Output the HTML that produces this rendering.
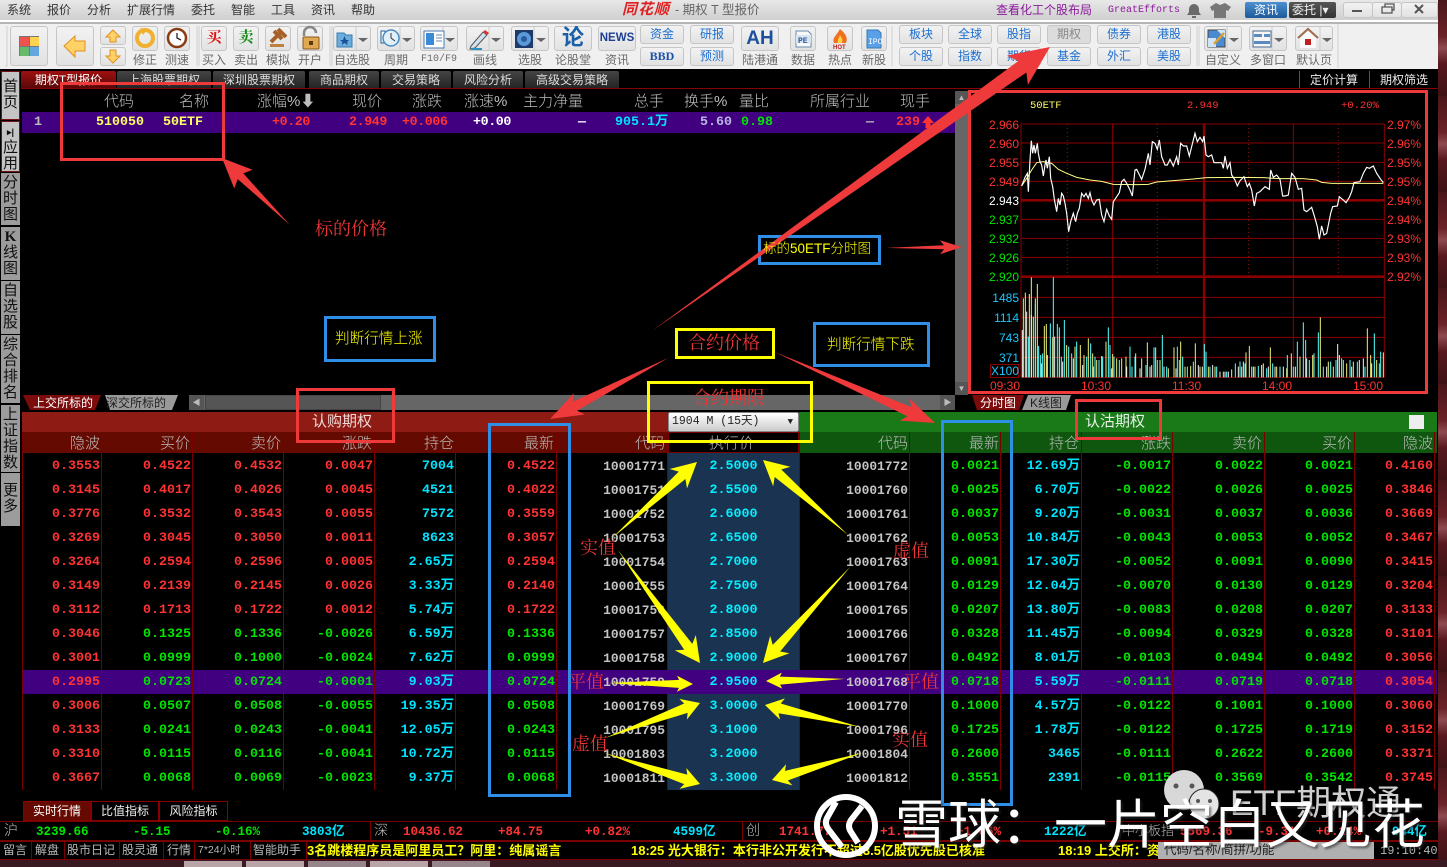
<!DOCTYPE html>
<html lang="zh"><head><meta charset="utf-8"><title>期权T型报价</title>
<style>
html,body{margin:0;padding:0;background:#000}
#p{position:relative;width:1447px;height:867px;overflow:hidden;background:#000;font-family:"Liberation Sans","Noto Sans CJK SC",sans-serif}
#p div,#p span{position:absolute;white-space:nowrap}
.m{top:3px;font-size:12px;line-height:15px;color:#333}
.b{background:linear-gradient(#f2f2f2,#e2e2e2);border:1px solid #c6c6c6;border-radius:3px;box-sizing:border-box}
.l{top:53px;font-size:12px;line-height:14px;color:#6a6a6a;text-align:center}
.bl{box-sizing:border-box;background:linear-gradient(#f2f2f2,#e2e2e2);border:1px solid #c6c6c6;border-radius:3px;text-align:center;font-size:12px;line-height:16px;color:#1c6fd0}
.tab{top:71px;height:17px;background:linear-gradient(#454545,#242424);color:#ddd;font-size:12px;line-height:18px;text-align:center;border-radius:2px 2px 0 0}
.s{left:1px;width:19px;background:#9c9c9c;color:#111;font-size:15px;line-height:16px;text-align:center;white-space:normal!important;box-sizing:border-box}
.h{font-size:15px;line-height:18px;color:#bdbdbd;font-weight:300}
.n{font-family:"Liberation Mono","Noto Sans CJK SC",monospace;font-weight:bold;font-size:13.33px;line-height:16px}
.row{left:0;width:1447px;height:24px}
.row i{position:absolute;top:6px;font-style:normal;font-family:"Liberation Mono","Noto Sans CJK SC",monospace;font-weight:bold;font-size:13.33px;line-height:16px;text-align:right;white-space:nowrap;left:0}
.row i:nth-child(1){width:100px}.row i:nth-child(2){width:191px}.row i:nth-child(3){width:282px}.row i:nth-child(4){width:373px}.row i:nth-child(5){width:454px}.row i:nth-child(6){width:555px}.row i:nth-child(7){width:665px;color:#c4c4c4;font-size:12.9px}
.row i:nth-child(8){left:668px;width:131px;text-align:center;color:#00f0ff}
.row i:nth-child(9){width:908px;color:#c4c4c4;font-size:12.9px}.row i:nth-child(10){width:999px}.row i:nth-child(11){width:1080px}.row i:nth-child(12){width:1171px}.row i:nth-child(13){width:1263px}.row i:nth-child(14){width:1353px}.row i:nth-child(15){width:1433px}
.r{color:#ff3333}.g{color:#00e600}.c{color:#00e4ff}
.cl{font-size:12px;line-height:14px;text-align:right;width:50px;left:969px}
.cr{font-size:12px;line-height:14px;color:#ff3333;left:1387px}
.ct{font-size:12px;line-height:14px;color:#ff3333;top:379px}
.st{top:824px;font-family:"Liberation Mono","Noto Sans CJK SC",monospace;font-size:12.5px;line-height:16px;font-weight:bold}
.bt{top:842px;font-size:12px;line-height:17px;color:#b8b8b8}
.yl{top:843px;font-size:13px;line-height:16px;color:#ffff00;font-weight:bold}
.an{color:#ee3535;font-size:18px;line-height:22px;font-family:"Liberation Serif","Noto Serif CJK SC",serif}
.ann{color:#ffff00;font-size:14.6px;line-height:18px;font-weight:300}
.box{box-sizing:border-box;border:3px solid #2f8fe6}
</style></head><body><div id="p">

<!-- title / menu -->
<div style="left:0;top:0;width:1438px;height:20px;background:linear-gradient(#e8e8e8,#cfcfcf)"></div>
<div style="left:0;top:20px;width:1438px;height:2px;background:#fff"></div>
<div style="left:0;top:22px;width:1438px;height:2px;background:#b4b4b4"></div>
<div style="left:0;top:24px;width:1438px;height:45px;background:#f0f0f0"></div>
<span class="m" style="left:7px">系统</span><span class="m" style="left:47px">报价</span><span class="m" style="left:87px">分析</span><span class="m" style="left:127px">扩展行情</span><span class="m" style="left:191px">委托</span><span class="m" style="left:231px">智能</span><span class="m" style="left:271px">工具</span><span class="m" style="left:311px">资讯</span><span class="m" style="left:351px">帮助</span>
<span style="left:622px;top:1px;font-size:15px;line-height:18px;font-weight:bold;font-style:italic;color:#e02020;letter-spacing:1px">同花顺</span>
<span style="left:675px;top:3px;font-size:12.5px;line-height:15px;color:#666">- 期权 T 型报价</span>
<span style="left:996px;top:3px;font-size:12px;line-height:15px;color:#8a1a9a">查看化工个股布局</span>
<span style="left:1108px;top:4px;font-family:'Liberation Mono',monospace;font-size:10px;line-height:14px;color:#8a1a9a">GreatEfforts</span>
<div style="left:1245px;top:2px;width:42px;height:16px;background:linear-gradient(#4c8fd0,#1c5a9a);color:#fff;font-size:12px;line-height:16px;text-align:center;border-radius:2px">资讯</div>
<div style="left:1289px;top:2px;width:47px;height:16px;background:linear-gradient(#555,#333);color:#eee;font-size:12px;line-height:16px;border-radius:2px;text-indent:3px">委托 |▾</div>
<div class="b" style="left:1343px;top:2px;width:30px;height:16px"></div><div class="b" style="left:1372px;top:2px;width:30px;height:16px"></div><div class="b" style="left:1401px;top:2px;width:37px;height:16px"></div>

<!-- toolbar plain buttons -->
<div class="b" style="left:10px;top:26px;width:38px;height:40px"></div>
<div class="b" style="left:56px;top:26px;width:38px;height:40px"></div>
<div class="b" style="left:100px;top:26px;width:26px;height:19px"></div>
<div class="b" style="left:100px;top:47px;width:26px;height:19px"></div>
<div class="b" style="left:132px;top:26px;width:26px;height:25px"></div>
<div class="b" style="left:164px;top:26px;width:26px;height:25px"></div>
<div class="b" style="left:201px;top:26px;width:26px;height:25px;color:#e01010;font:bold 15px/23px 'Liberation Serif','Noto Serif CJK SC',serif;text-align:center">买</div>
<div class="b" style="left:233px;top:26px;width:26px;height:25px;color:#108a10;font:bold 15px/23px 'Liberation Serif','Noto Serif CJK SC',serif;text-align:center">卖</div>
<div class="b" style="left:265px;top:26px;width:26px;height:25px"></div>
<div class="b" style="left:297px;top:26px;width:26px;height:25px"></div>
<div class="b" style="left:333px;top:26px;width:38px;height:25px"></div>
<div class="b" style="left:377px;top:26px;width:38px;height:25px"></div>
<div class="b" style="left:420px;top:26px;width:38px;height:25px"></div>
<div class="b" style="left:466px;top:26px;width:38px;height:25px"></div>
<div class="b" style="left:511px;top:26px;width:38px;height:25px"></div>
<div class="b" style="left:554px;top:26px;width:38px;height:25px;color:#1a5fa8;font-size:22px;line-height:22px;font-weight:bold;text-align:center">论</div>
<div class="b" style="left:598px;top:26px;width:38px;height:25px;color:#1d3f94;font:bold 11.5px/23px 'Liberation Sans',sans-serif;text-align:center">NEWS</div>
<div class="bl" style="left:640px;top:25px;width:44px;height:19px">资金</div>
<div class="bl" style="left:640px;top:47px;width:44px;height:19px;font:bold 12px/16px 'Liberation Serif',serif;color:#1a50a8">BBD</div>
<div class="bl" style="left:690px;top:25px;width:44px;height:19px">研报</div>
<div class="bl" style="left:690px;top:47px;width:44px;height:19px">预测</div>
<div class="b" style="left:741px;top:26px;width:38px;height:25px;color:#1d4f9c;font:bold 19px/23px 'Liberation Sans',sans-serif;text-align:center">AH</div>
<div class="b" style="left:790px;top:26px;width:26px;height:25px"></div>
<div class="b" style="left:827px;top:26px;width:26px;height:25px"></div>
<div class="b" style="left:861px;top:26px;width:26px;height:25px"></div>
<div class="bl" style="left:899px;top:25px;width:44px;height:19px">板块</div><div class="bl" style="left:899px;top:47px;width:44px;height:19px">个股</div>
<div class="bl" style="left:948px;top:25px;width:44px;height:19px">全球</div><div class="bl" style="left:948px;top:47px;width:44px;height:19px">指数</div>
<div class="bl" style="left:997px;top:25px;width:44px;height:19px">股指</div><div class="bl" style="left:997px;top:47px;width:44px;height:19px">期货</div>
<div class="bl" style="left:1047px;top:25px;width:44px;height:19px;color:#888;background:#dcdcdc">期权</div><div class="bl" style="left:1047px;top:47px;width:44px;height:19px">基金</div>
<div class="bl" style="left:1097px;top:25px;width:44px;height:19px">债券</div><div class="bl" style="left:1097px;top:47px;width:44px;height:19px">外汇</div>
<div class="bl" style="left:1147px;top:25px;width:44px;height:19px">港股</div><div class="bl" style="left:1147px;top:47px;width:44px;height:19px">美股</div>
<div class="b" style="left:1204px;top:26px;width:38px;height:25px"></div>
<div class="b" style="left:1249px;top:26px;width:38px;height:25px"></div>
<div class="b" style="left:1295px;top:26px;width:38px;height:25px"></div>
<!-- toolbar labels -->
<span class="l" style="left:132px;width:26px">修正</span><span class="l" style="left:164px;width:26px">测速</span>
<span class="l" style="left:201px;width:26px">买入</span><span class="l" style="left:233px;width:26px">卖出</span><span class="l" style="left:265px;width:26px">模拟</span><span class="l" style="left:297px;width:26px">开户</span>
<span class="l" style="left:333px;width:38px">自选股</span><span class="l" style="left:377px;width:38px">周期</span><span class="l" style="left:420px;width:38px;font-family:'Liberation Mono',monospace;font-size:10px">F10/F9</span>
<span class="l" style="left:466px;width:38px">画线</span><span class="l" style="left:511px;width:38px">选股</span><span class="l" style="left:554px;width:38px">论股堂</span><span class="l" style="left:598px;width:38px">资讯</span>
<span class="l" style="left:741px;width:38px">陆港通</span><span class="l" style="left:790px;width:26px">数据</span><span class="l" style="left:827px;width:26px">热点</span><span class="l" style="left:861px;width:26px">新股</span>
<span class="l" style="left:1204px;width:38px">自定义</span><span class="l" style="left:1249px;width:38px">多窗口</span><span class="l" style="left:1295px;width:38px">默认页</span>

<!-- toolbar icons -->
<svg style="position:absolute;left:0;top:0" width="1447" height="70">
<g stroke="#d0d0d0" fill="none"><path d="M7 26V66M5 66H7M197 26V66M199 26V66M330 26V66M332 26V66M892 26V66M1197 26V66M1199 26V66M1338 24V68"/></g>
<rect x="19" y="36" width="20" height="20" fill="#777"/><rect x="20" y="37" width="9" height="9" fill="#ef5350"/><rect x="30" y="37" width="9" height="9" fill="#ffd54f"/><rect x="20" y="47" width="9" height="9" fill="#66bb6a"/><rect x="30" y="47" width="9" height="9" fill="#64a6e0"/>
<path d="M64 46 75 36V41H85V51H75V57Z" fill="#ffd268" stroke="#e09020"/>
<path d="M113 30 120 37H116V42H110V37H106Z" fill="#ffd268" stroke="#e09020"/>
<path d="M113 63 120 56H116V50H110V56H106Z" fill="#ffd268" stroke="#e09020"/>
<circle cx="145" cy="38" r="8" fill="none" stroke="#f0b030" stroke-width="4"/><path d="M140 28 147 30 143 35Z" fill="#f0b030"/>
<circle cx="177" cy="38" r="9" fill="#fff" stroke="#8a3a10" stroke-width="2.5"/><path d="M177 33V38L181 40" fill="none" stroke="#222" stroke-width="1.3"/>
<path d="M271 42 282 31M278 29 286 37M282 39 274 31" stroke="#a8602a" stroke-width="4" fill="none"/><rect x="270" y="44" width="14" height="3" fill="#c08040"/>
<path d="M304 36V33a6 6 0 0 1 12 0" fill="none" stroke="#888" stroke-width="2.5"/><rect x="303" y="37" width="16" height="12" rx="1" fill="#e0a850" stroke="#8a5a20"/><rect x="309" y="41" width="4" height="4" fill="#5a3a10"/>
<path d="M337 33H344L346 35H352V47H337Z" fill="#6aaede" stroke="#3a7ab0"/><path d="M344.500 36 346 40H349L347 42 348 45 344.500 43 341.500 45 342.500 42 340 40H343Z" fill="#1a4f9a"/>
<path d="M358 38H368L363 42Z M402 38H412L407 42Z M445 38H455L450 42Z M491 38H501L496 42Z M536 38H546L541 42Z M1229 38H1239L1234 42Z M1274 38H1284L1279 42Z M1322 38H1332L1327 42Z" fill="#666"/>
<path d="M356 27V50M400 27V50M443 27V50M489 27V50M534 27V50M1227 27V50M1272 27V50M1320 27V50" stroke="#ccc"/>
<rect x="381" y="31" width="4" height="12" fill="#fff" stroke="#2060a0"/><circle cx="391" cy="38" r="8" fill="#e0f0fa" stroke="#4a8ac0" stroke-width="1.500"/><path d="M391 33V38L395 41" stroke="#333" fill="none"/>
<rect x="424" y="31" width="20" height="17" fill="#fff" stroke="#4a7ab0"/><rect x="426" y="33" width="8" height="12" fill="#3a8ad8"/><path d="M436 35H442M436 38H442M436 41H442" stroke="#6a8ab0"/>
<path d="M471 46 483 32 487 35 475 48 470 49Z" fill="#cfe0f0" stroke="#555"/><path d="M483 32 485 30 489 33 487 35Z" fill="#e03030"/><path d="M471 49H482" stroke="#2a90c0" stroke-width="2"/>
<rect x="515" y="30" width="18" height="18" fill="#1d3a6a"/><circle cx="524" cy="39" r="7" fill="#5a9ad8"/><circle cx="524" cy="39" r="3" fill="#2a5a98"/>
<path d="M796 31H808L811 34V47H796Z" fill="#f8f8f8" stroke="#6a8ab0"/><rect x="796" y="35" width="15" height="8" fill="#d8e4f0"/>
<text x="798" y="43" font-family="Liberation Mono,monospace" font-size="8" font-weight="bold" fill="#2a5a98">PE</text>
<path d="M840 29C846 34 848 38 846 43H834C832 38 836 36 840 29Z" fill="#f07020"/><path d="M840 35C842 38 843 40 842 43H838C837 40 839 38 840 35Z" fill="#ffd040"/>
<text x="833" y="49" font-family="Liberation Sans,sans-serif" font-size="6" font-weight="bold" fill="#c02020">HOT</text>
<path d="M867 30H878L881 33V48H867Z" fill="#5aa0e8" stroke="#3a7ab0"/><text x="868" y="44" font-family="Liberation Mono,monospace" font-size="8" fill="#fff">IPO</text>
<rect x="1208" y="30" width="17" height="17" fill="#4a8ad0" stroke="#444"/><path d="M1217 30H1225V38ZM1208 38H1216V47H1208Z" fill="#cfe4f6"/><path d="M1214 44 1224 33" stroke="#e0a030" stroke-width="2.500"/>
<rect x="1253" y="31" width="18" height="16" fill="#f6f6f6" stroke="#4a6a90"/><path d="M1254 34H1262V37H1254ZM1264 34H1270V37H1264ZM1254 41H1270V44H1254Z" fill="#5a8ac0"/>
<path d="M1298 38 1308 29 1318 38" fill="none" stroke="#a06a4a" stroke-width="2"/><path d="M1300 38 1308 31 1316 38V48H1300Z" fill="#fafafa"/><rect x="1305" y="39" width="6" height="6" fill="#c02020"/>
<path d="M1191 5a5 5 0 0 1 5 5v3l2 3h-14l2-3v-3a5 5 0 0 1 5-5ZM1189 17h4v2h-4Z" transform="translate(3 -1)" fill="#6a6a6a"/>
<path d="M1216 3 1220 5 1225 3 1231 7 1228 11 1226 10V18H1214V10L1212 11 1210 7Z" fill="#777"/>
<path d="M1352 11H1362" stroke="#555" stroke-width="2"/><path d="M1382 7H1392V13H1382ZM1385 7V4H1394V10H1392" fill="none" stroke="#555" stroke-width="1.300"/><path d="M1415 5 1423 13M1423 5 1415 13" stroke="#555" stroke-width="2"/>
</svg>

<!-- left sidebar -->
<div class="s" style="top:71px;height:49px;background:#c4c4c4;border:1px solid #7a1010;padding-top:7px">首<br>页</div>
<div class="s" style="top:121px;height:51px;background:#c4c4c4;border:1px solid #7a1010;padding-top:1px"><b style="font-size:9px;line-height:15px">▸|</b><br>应<br>用</div>
<div class="s" style="top:173px;height:52px;padding-top:2px">分<br>时<br>图</div>
<div class="s" style="top:227px;height:53px;padding-top:2px"><b style="font-family:'Liberation Serif',serif">K</b><br>线<br>图</div>
<div class="s" style="top:281px;height:53px;padding-top:2px">自<br>选<br>股</div>
<div class="s" style="top:335px;height:68px;padding-top:2px">综<br>合<br>排<br>名</div>
<div class="s" style="top:405px;height:67px;padding-top:2px">上<br>证<br>指<br>数</div>
<div class="s" style="top:473px;height:53px;padding-top:10px">更<br>多</div>

<!-- top tabs -->
<div class="tab" style="left:21px;width:95px;background:linear-gradient(#a01010,#5a0808);color:#fff">期权T型报价</div>
<div class="tab" style="left:117px;width:94px">上海股票期权</div>
<div class="tab" style="left:213px;width:92px">深圳股票期权</div>
<div class="tab" style="left:309px;width:70px">商品期权</div>
<div class="tab" style="left:381px;width:70px">交易策略</div>
<div class="tab" style="left:453px;width:70px">风险分析</div>
<div class="tab" style="left:525px;width:94px">高级交易策略</div>
<div style="left:1299px;top:71px;width:1px;height:17px;background:#555"></div><div style="left:1369px;top:71px;width:1px;height:17px;background:#555"></div>
<span style="left:1310px;top:72px;font-size:12px;line-height:16px;color:#eee">定价计算</span><span style="left:1380px;top:72px;font-size:12px;line-height:16px;color:#eee">期权筛选</span>
<div style="left:21px;top:88px;width:1417px;height:1px;background:#800"></div>

<!-- top table -->
<span class="h" style="left:104px;top:93px">代码</span><span class="h" style="left:179px;top:93px">名称</span><span class="h" style="left:257px;top:93px">涨幅<b>%⬇</b></span><span class="h" style="left:352px;top:93px">现价</span><span class="h" style="left:412px;top:93px">涨跌</span><span class="h" style="left:464px;top:93px">涨速<b>%</b></span><span class="h" style="left:523px;top:93px">主力净量</span><span class="h" style="left:634px;top:93px">总手</span><span class="h" style="left:684px;top:93px">换手<b>%</b></span><span class="h" style="left:739px;top:93px">量比</span><span class="h" style="left:810px;top:93px">所属行业</span><span class="h" style="left:900px;top:93px">现手</span>
<div style="left:22px;top:112px;width:933px;height:21px;background:#400080"></div>
<span class="n" style="left:34px;top:115px;color:#bbb">1</span>
<span class="n" style="left:96px;top:115px;color:#ffff66">510050</span><span class="n" style="left:163px;top:115px;color:#ffff66">50ETF</span>
<span class="n r" style="left:272px;top:115px;letter-spacing:-.4px">+0.20</span><span class="n r" style="left:349px;top:115px;letter-spacing:-.4px">2.949</span><span class="n r" style="left:402px;top:115px;letter-spacing:-.4px">+0.006</span><span class="n" style="left:473px;top:115px;color:#fff;letter-spacing:-.4px">+0.00</span>
<span class="n" style="left:578px;top:115px;color:#fff">—</span><span class="n c" style="left:615px;top:115px">905.1万</span><span class="n" style="left:700px;top:115px;color:#b8b8e0">5.60</span><span class="n g" style="left:741px;top:115px">0.98</span><span class="n" style="left:866px;top:115px;color:#bbb">—</span><span class="n r" style="left:896px;top:115px">239</span>
<svg style="position:absolute;left:922px;top:116px" width="13" height="13"><path d="M6 0 12 7H8.500V12H3.500V7H0Z" fill="#ff3333"/></svg>

<!-- vertical scrollbar / bottom tab strip -->
<div style="left:955px;top:91px;width:13px;height:304px;background:#666"></div>
<div style="left:955px;top:91px;width:13px;height:13px;background:#555;color:#bbb;font-size:8px;line-height:13px;text-align:center">▲</div>
<div style="left:955px;top:382px;width:13px;height:13px;background:#555;color:#bbb;font-size:8px;line-height:13px;text-align:center">▼</div>
<svg style="position:absolute;left:20px;top:394px" width="170" height="17"><path d="M3 1H81L75 16H10Z" fill="#7c0c0c"/><path d="M85 1H158L152 16H90Z" fill="#999"/></svg>
<span style="left:33px;top:396px;font-size:12px;line-height:14px;color:#fff">上交所标的</span>
<span style="left:106px;top:396px;font-size:12px;line-height:14px;color:#222">深交所标的</span>
<div style="left:189px;top:395px;width:766px;height:15px;background:#666"></div>
<div style="left:189px;top:395px;width:15px;height:15px;background:#555;color:#bbb;font-size:8px;line-height:15px;text-align:center">◀</div>
<div style="left:205px;top:395px;width:176px;height:15px;background:#555;border:1px solid #444;box-sizing:border-box"></div>
<div style="left:940px;top:395px;width:15px;height:15px;background:#555;color:#bbb;font-size:8px;line-height:15px;text-align:center">▶</div>
<svg style="position:absolute;left:968px;top:394px" width="110" height="17"><path d="M4 1H56L51 16H9Z" fill="#7c0c0c"/><path d="M60 1H103L98 16H54Z" fill="#999"/></svg>
<span style="left:980px;top:396px;font-size:12px;line-height:14px;color:#fff">分时图</span><span style="left:1030px;top:396px;font-size:12px;line-height:14px;color:#222">K线图</span>

<!-- chart -->
<svg style="position:absolute;left:0;top:0" width="1447" height="410">
<g transform="translate(960 90) scale(.33333)" fill="none">
<path d="M183 102H1273M183 159H1273M183 217H1273M183 274H1273M183 388H1273M183 445H1273M183 502H1273M183 622H1273M183 682H1273M183 742H1273M183 802H1273M183 862H1273" stroke="#8a0000" stroke-width="3"/>
<path d="M183 331H1273M183 560H1273" stroke="#8a0000" stroke-width="8"/>
<path d="M183 560H1273" stroke="#8a0000" stroke-width="4"/>
<path d="M183 102V862M458 102V862M1000 102V862M1273 102V862" stroke="#8a0000" stroke-width="3"/>
<path d="M732 102V862" stroke="#8a0000" stroke-width="7"/>
<path d="M322 102V560M592 102V560M866 102V560M1135 102V560" stroke="#a01010" stroke-width="3" stroke-dasharray="3 9"/>
<path stroke="#eeee77" stroke-width="3" d="M190 862V625M196 862V608M208 862V612M214 862V562M220 862V680M226 862V625M232 862V582M253 862V708M259 862V702M278 862V742M298 862V740M320 862V765M345 862V770M361 862V765M372 862V795M385 862V745M398 862V790M410 862V810M425 862V798M438 862V755M458 862V792M470 862V805M485 862V805M498 862V800M527 862V790M545 862V805M562 862V757M575 862V825M587 862V772M600 862V810M625 862V835M642 862V772M662 862V755M675 862V830M692 862V828M706 862V760M720 862V830M745 862V830M765 862V830M790 862V845M815 862V838M845 862V830M858 862V787M868 862V768M885 862V830M910 862V820M931 862V772M950 862V830M980 862V835M994 862V790M1020 862V800M1058 862V795M1081 862V682M1105 862V815M1120 862V830M1145 862V805M1160 862V820M1180 862V815M1222 862V715M1232 862V795M1250 862V810M1270 862V787"/>
<path stroke="#55ffff" stroke-width="3" d="M205 862V740M226 862V640M236 862V768M242 862V795M248 862V790M271 862V700M280 862V562M292 862V702M298 862V712M304 862V800M313 862V690M326 862V770M335 862V790M350 862V755M380 862V800M392 862V760M405 862V800M417 862V810M428 862V800M445 862V712M450 862V765M462 862V800M478 862V810M510 862V770M516 862V830M525 862V800M558 862V825M582 862V772M592 862V810M607 862V735M620 862V830M652 862V770M658 862V810M668 862V800M682 862V830M700 862V815M733 862V762M738 862V785M750 862V830M770 862V830M800 862V845M826 862V820M840 862V815M855 862V820M875 862V830M895 862V828M920 862V835M938 862V820M960 862V830M982 862V795M1000 862V830M1012 862V755M1030 862V697M1037 862V750M1048 862V810M1062 862V790M1075 862V727M1090 862V830M1112 862V815M1128 862V810M1150 862V810M1170 862V810M1192 862V815M1215 862V830M1243 862V730M1258 862V820M1262 862V785"/>
<path stroke="#f4f4f4" stroke-width="3" d="M187 862V720M200 862V665M214 862V675M244 862V820M262 862V795M284 862V740M308 862V815M340 862V805M368 862V825M400 862V830M455 862V835M500 862V830M540 862V835M570 862V830M612 862V830M648 862V835M715 862V825M727 862V830M758 862V825M780 862V845M795 862V845M805 862V845M835 862V830M850 862V815M880 862V830M905 862V825M925 862V830M945 862V830M970 862V830M1006 862V830M1040 862V805M1100 862V830M1133 862V762M1138 862V795M1175 862V830M1198 862V810M1210 862V805M1235 862V820"/>
<polyline stroke="#ffff88" stroke-width="3" points="185,288 200,265 215,240 230,218 250,215 275,220 295,238 320,250 350,262 390,270 425,274 460,283 530,284 565,283 590,276 640,272 700,267 740,263 830,262 910,263 960,266 1030,266 1070,270 1085,277 1115,280 1270,280"/>
<polyline stroke="#ffffff" stroke-width="3.500" points="185,288 195,262 202,250 205,305 210,210 214,152 218,190 222,165 226,190 232,160 235,190 240,215 245,225 250,258 255,225 258,210 262,235 268,200 272,265 278,290 283,328 290,365 295,325 300,345 305,310 310,318 315,340 320,370 326,425 332,395 340,370 347,395 352,370 358,355 365,310 372,320 378,310 385,325 390,308 395,330 402,345 410,330 418,328 425,375 432,395 440,358 448,378 455,388 460,335 470,320 478,308 485,275 492,268 500,280 510,300 517,318 525,240 530,238 545,268 555,238 565,190 570,225 577,155 585,160 592,178 598,150 605,200 615,225 622,225 630,208 640,228 650,200 655,225 662,160 670,168 680,168 688,198 695,170 705,130 712,155 720,142 728,155 732,138 738,195 745,200 755,195 762,218 785,218 790,235 795,198 802,235 810,218 815,255 825,270 832,288 840,272 852,260 862,290 868,280 875,300 883,348 890,310 900,305 915,290 928,298 932,240 940,262 950,255 960,268 968,318 975,318 985,315 995,250 1005,262 1015,298 1025,295 1032,360 1040,365 1055,352 1065,385 1072,410 1078,448 1085,408 1092,435 1100,430 1112,370 1118,350 1132,348 1138,320 1150,330 1158,338 1168,322 1175,305 1182,278 1200,275 1210,250 1220,232 1228,235 1240,228 1250,250 1262,268 1270,278"/>
</g></svg>
<span style="left:1030px;top:99px;font-family:'Liberation Mono',monospace;font-size:10.500px;line-height:14px;color:#ffff66">50ETF</span>
<span style="left:1187px;top:99px;font-family:'Liberation Mono',monospace;font-size:10.500px;line-height:14px;color:#ff3333">2.949</span>
<span style="left:1341px;top:99px;font-family:'Liberation Mono',monospace;font-size:10.500px;line-height:14px;color:#ff3333">+0.20%</span>
<span class="cl r" style="top:118px">2.966</span><span class="cl r" style="top:137px">2.960</span><span class="cl r" style="top:156px">2.955</span><span class="cl r" style="top:175px">2.949</span><span class="cl" style="top:194px;color:#fff">2.943</span><span class="cl g" style="top:213px">2.937</span><span class="cl g" style="top:232px">2.932</span><span class="cl g" style="top:251px">2.926</span><span class="cl g" style="top:270px">2.920</span>
<span class="cl" style="top:291px;color:#1cc8ff">1485</span><span class="cl" style="top:311px;color:#1cc8ff">1114</span><span class="cl" style="top:331px;color:#1cc8ff">743</span><span class="cl" style="top:351px;color:#1cc8ff">371</span>
<div style="left:990px;top:364px;width:29px;height:14px;box-sizing:border-box;border:1px solid #8a0000;color:#1cc8ff;font-size:12px;line-height:13px;text-align:center">X100</div>
<span class="cr" style="top:118px">2.97%</span><span class="cr" style="top:137px">2.96%</span><span class="cr" style="top:156px">2.95%</span><span class="cr" style="top:175px">2.95%</span><span class="cr" style="top:194px">2.94%</span><span class="cr" style="top:213px">2.94%</span><span class="cr" style="top:232px">2.93%</span><span class="cr" style="top:251px">2.93%</span><span class="cr" style="top:270px">2.92%</span>
<span class="ct" style="left:990px">09:30</span><span class="ct" style="left:1081px">10:30</span><span class="ct" style="left:1172px">11:30</span><span class="ct" style="left:1262px">14:00</span><span class="ct" style="left:1353px">15:00</span>

<!-- lower table headers -->
<div style="left:22px;top:412px;width:646px;height:20px;background:#8f1c14"></div>
<div style="left:799px;top:412px;width:638px;height:20px;background:#1a7a18"></div>
<div style="left:668px;top:412px;width:131px;height:20px;background:#000"></div>
<div style="left:22px;top:432px;width:646px;height:21px;background:#650a00"></div>
<div style="left:799px;top:432px;width:638px;height:21px;background:#0f560f"></div>
<div style="left:668px;top:432px;width:131px;height:21px;box-sizing:border-box;border:1px solid #7a0000;background:#000"></div>
<div style="left:668px;top:412px;width:131px;height:20px;box-sizing:border-box;background:linear-gradient(#fff,#ccc);border:1px solid #888;border-radius:2px;color:#222;font:11.500px/18px 'Liberation Mono','Noto Sans CJK SC',monospace;text-indent:3px">1904 M (15天)<span style="right:5px;top:0;font-size:9px">▼</span></div>
<div style="left:1409px;top:415px;width:15px;height:14px;background:#eee"></div>
<span style="left:312px;top:413px;font-size:15px;line-height:18px;color:#f0d8d8">认购期权</span>
<span style="left:1085px;top:413px;font-size:15px;line-height:18px;color:#e8f0e8">认沽期权</span>
<span class="h" style="left:70px;top:435px">隐波</span><span class="h" style="left:160px;top:435px">买价</span><span class="h" style="left:251px;top:435px">卖价</span><span class="h" style="left:342px;top:435px">涨跌</span><span class="h" style="left:424px;top:435px">持仓</span><span class="h" style="left:524px;top:435px">最新</span><span class="h" style="left:635px;top:435px">代码</span><span class="h" style="left:709px;top:435px">执行价</span>
<span class="h" style="left:878px;top:435px">代码</span><span class="h" style="left:969px;top:435px">最新</span><span class="h" style="left:1049px;top:435px">持仓</span><span class="h" style="left:1141px;top:435px">涨跌</span><span class="h" style="left:1232px;top:435px">卖价</span><span class="h" style="left:1322px;top:435px">买价</span><span class="h" style="left:1403px;top:435px">隐波</span>

<!-- lower table body -->
<div style="left:668px;top:453px;width:131px;height:337px;background:#1a3350"></div>
<div style="left:22px;top:670px;width:1415px;height:24px;background:#400080"></div>
<svg style="position:absolute;left:0;top:432px" width="1447" height="360"><path d="M22.500 0V358M101.500 0V358M192.500 0V358M283.500 0V358M374.500 0V358M455.500 0V358M556.500 0V358M667.500 0V358M799.500 0V358M909.500 0V358M1000.500 0V358M1081.500 0V358M1172.500 0V358M1264.500 0V358M1354.500 0V358M1434.500 0V358" stroke="#7a0000" fill="none"/></svg>

<div class="row" style="top:453px"><i class=r>0.3553</i><i class=r>0.4522</i><i class=r>0.4532</i><i class=r>0.0047</i><i class=c>7004</i><i class=r>0.4522</i><i>10001771</i><i>2.5000</i><i>10001772</i><i class=g>0.0021</i><i class=c>12.69万</i><i class=g>-0.0017</i><i class=g>0.0022</i><i class=g>0.0021</i><i class=r>0.4160</i></div>
<div class="row" style="top:477px"><i class=r>0.3145</i><i class=r>0.4017</i><i class=r>0.4026</i><i class=r>0.0045</i><i class=c>4521</i><i class=r>0.4022</i><i>10001751</i><i>2.5500</i><i>10001760</i><i class=g>0.0025</i><i class=c>6.70万</i><i class=g>-0.0022</i><i class=g>0.0026</i><i class=g>0.0025</i><i class=r>0.3846</i></div>
<div class="row" style="top:501px"><i class=r>0.3776</i><i class=r>0.3532</i><i class=r>0.3543</i><i class=r>0.0055</i><i class=c>7572</i><i class=r>0.3559</i><i>10001752</i><i>2.6000</i><i>10001761</i><i class=g>0.0037</i><i class=c>9.20万</i><i class=g>-0.0031</i><i class=g>0.0037</i><i class=g>0.0036</i><i class=r>0.3669</i></div>
<div class="row" style="top:525px"><i class=r>0.3269</i><i class=r>0.3045</i><i class=r>0.3050</i><i class=r>0.0011</i><i class=c>8623</i><i class=r>0.3057</i><i>10001753</i><i>2.6500</i><i>10001762</i><i class=g>0.0053</i><i class=c>10.84万</i><i class=g>-0.0043</i><i class=g>0.0053</i><i class=g>0.0052</i><i class=r>0.3467</i></div>
<div class="row" style="top:549px"><i class=r>0.3264</i><i class=r>0.2594</i><i class=r>0.2596</i><i class=r>0.0005</i><i class=c>2.65万</i><i class=r>0.2594</i><i>10001754</i><i>2.7000</i><i>10001763</i><i class=g>0.0091</i><i class=c>17.30万</i><i class=g>-0.0052</i><i class=g>0.0091</i><i class=g>0.0090</i><i class=r>0.3415</i></div>
<div class="row" style="top:573px"><i class=r>0.3149</i><i class=r>0.2139</i><i class=r>0.2145</i><i class=r>0.0026</i><i class=c>3.33万</i><i class=r>0.2140</i><i>10001755</i><i>2.7500</i><i>10001764</i><i class=g>0.0129</i><i class=c>12.04万</i><i class=g>-0.0070</i><i class=g>0.0130</i><i class=g>0.0129</i><i class=r>0.3204</i></div>
<div class="row" style="top:597px"><i class=r>0.3112</i><i class=r>0.1713</i><i class=r>0.1722</i><i class=r>0.0012</i><i class=c>5.74万</i><i class=r>0.1722</i><i>10001756</i><i>2.8000</i><i>10001765</i><i class=g>0.0207</i><i class=c>13.80万</i><i class=g>-0.0083</i><i class=g>0.0208</i><i class=g>0.0207</i><i class=r>0.3133</i></div>
<div class="row" style="top:621px"><i class=r>0.3046</i><i class=g>0.1325</i><i class=g>0.1336</i><i class=g>-0.0026</i><i class=c>6.59万</i><i class=g>0.1336</i><i>10001757</i><i>2.8500</i><i>10001766</i><i class=g>0.0328</i><i class=c>11.45万</i><i class=g>-0.0094</i><i class=g>0.0329</i><i class=g>0.0328</i><i class=r>0.3101</i></div>
<div class="row" style="top:645px"><i class=r>0.3001</i><i class=g>0.0999</i><i class=g>0.1000</i><i class=g>-0.0024</i><i class=c>7.62万</i><i class=g>0.0999</i><i>10001758</i><i>2.9000</i><i>10001767</i><i class=g>0.0492</i><i class=c>8.01万</i><i class=g>-0.0103</i><i class=g>0.0494</i><i class=g>0.0492</i><i class=r>0.3056</i></div>
<div class="row" style="top:669px"><i class=r>0.2995</i><i class=g>0.0723</i><i class=g>0.0724</i><i class=g>-0.0001</i><i class=c>9.03万</i><i class=g>0.0724</i><i>10001759</i><i>2.9500</i><i>10001768</i><i class=g>0.0718</i><i class=c>5.59万</i><i class=g>-0.0111</i><i class=g>0.0719</i><i class=g>0.0718</i><i class=r>0.3054</i></div>
<div class="row" style="top:693px"><i class=r>0.3006</i><i class=g>0.0507</i><i class=g>0.0508</i><i class=g>-0.0055</i><i class=c>19.35万</i><i class=g>0.0508</i><i>10001769</i><i>3.0000</i><i>10001770</i><i class=g>0.1000</i><i class=c>4.57万</i><i class=g>-0.0122</i><i class=g>0.1001</i><i class=g>0.1000</i><i class=r>0.3060</i></div>
<div class="row" style="top:717px"><i class=r>0.3133</i><i class=g>0.0241</i><i class=g>0.0243</i><i class=g>-0.0041</i><i class=c>12.05万</i><i class=g>0.0243</i><i>10001795</i><i>3.1000</i><i>10001796</i><i class=g>0.1725</i><i class=c>1.78万</i><i class=g>-0.0122</i><i class=g>0.1725</i><i class=g>0.1719</i><i class=r>0.3152</i></div>
<div class="row" style="top:741px"><i class=r>0.3310</i><i class=g>0.0115</i><i class=g>0.0116</i><i class=g>-0.0041</i><i class=c>10.72万</i><i class=g>0.0115</i><i>10001803</i><i>3.2000</i><i>10001804</i><i class=g>0.2600</i><i class=c>3465</i><i class=g>-0.0111</i><i class=g>0.2622</i><i class=g>0.2600</i><i class=r>0.3371</i></div>
<div class="row" style="top:765px"><i class=r>0.3667</i><i class=g>0.0068</i><i class=g>0.0069</i><i class=g>-0.0023</i><i class=c>9.37万</i><i class=g>0.0068</i><i>10001811</i><i>3.3000</i><i>10001812</i><i class=g>0.3551</i><i class=c>2391</i><i class=g>-0.0115</i><i class=g>0.3569</i><i class=g>0.3542</i><i class=r>0.3745</i></div>

<!-- lower tabs -->
<div style="left:23px;top:801px;width:68px;height:20px;box-sizing:border-box;border:1px solid #8a0000;background:#650a00;color:#fff;font-size:12px;line-height:18px;text-align:center">实时行情</div>
<div style="left:91px;top:801px;width:68px;height:20px;box-sizing:border-box;border:1px solid #8a0000;color:#eee;font-size:12px;line-height:18px;text-align:center">比值指标</div>
<div style="left:159px;top:801px;width:69px;height:20px;box-sizing:border-box;border:1px solid #8a0000;color:#eee;font-size:12px;line-height:18px;text-align:center">风险指标</div>

<!-- status bars -->
<div style="left:0;top:821px;width:1438px;height:1px;background:#7a0000"></div>
<div style="left:0;top:840px;width:1438px;height:2px;background:#7a0000"></div>
<div style="left:0;top:859px;width:1438px;height:1px;background:#7a0000"></div>
<div style="left:370px;top:822px;width:1px;height:18px;background:#7a0000"></div>
<div style="left:742px;top:822px;width:1px;height:18px;background:#7a0000"></div>
<span class="st" style="left:4px;color:#bbb;font-weight:300;font-size:14px">沪</span><span class="st g" style="left:36px">3239.66</span><span class="st g" style="left:133px">-5.15</span><span class="st g" style="left:215px">-0.16%</span><span class="st c" style="left:302px">3803亿</span>
<span class="st" style="left:374px;color:#bbb;font-weight:300;font-size:14px">深</span><span class="st r" style="left:403px">10436.62</span><span class="st r" style="left:498px">+84.75</span><span class="st r" style="left:585px">+0.82%</span><span class="st c" style="left:673px">4599亿</span>
<span class="st" style="left:746px;color:#bbb;font-weight:300;font-size:14px">创</span><span class="st r" style="left:779px">1741.77</span><span class="st r" style="left:880px">+1.51</span><span class="st r" style="left:956px">+1.06%</span><span class="st c" style="left:1044px">1222亿</span>
<span class="st" style="left:1122px;color:#bbb;font-weight:300;font-size:13px">中小板指</span><span class="st r" style="left:1180px">5569.36</span><span class="st r" style="left:1258px">-9.31</span><span class="st r" style="left:1316px">+0.14%</span><span class="st c" style="left:1392px">944亿</span>

<span class="bt" style="left:3px">留言</span><span class="bt" style="left:35px">解盘</span><span class="bt" style="left:67px">股市日记</span><span class="bt" style="left:122px">股灵通</span><span class="bt" style="left:167px">行情</span><span class="bt" style="left:198px;font-size:10.5px">7*24小时</span><span class="bt" style="left:253px">智能助手</span>
<svg style="position:absolute;left:0;top:841px" width="320" height="19"><path d="M31.500 0V19M64.500 0V19M119.500 0V19M163.500 0V19M194.500 0V19M250.500 0V19M306.500 0V19" stroke="#7a0000"/></svg>
<span class="yl" style="left:307px">3名跳楼程序员是阿里员工？阿里：纯属谣言</span>
<span class="yl" style="left:631px">18:25 光大银行：本行非公开发行不超过3.5亿股优先股已核准</span>
<span class="yl" style="left:1058px">18:19 上交所：资</span>
<div style="left:1158px;top:842px;width:216px;height:17px;background:#b0b0b0;color:#222;font-size:12.5px;line-height:17px;text-indent:6px">代码/名称/简拼/功能</div>
<span style="left:1380px;top:844px;font-family:'Liberation Mono',monospace;font-size:12px;line-height:14px;color:#b8b8b8">19:10:40</span>

<!-- wallpaper edges -->
<div style="left:1438px;top:0;width:9px;height:867px;background:repeating-linear-gradient(180deg,#4a161a 0,#6a2228 36px,#8e4a50 48px,#56181e 64px,#3e1216 96px)"></div>
<div style="left:0;top:860px;width:1447px;height:7px;background:#3a1a22"></div>
<div style="left:184px;top:861px;width:58px;height:6px;background:#b9a4a8"></div><div style="left:246px;top:861px;width:58px;height:6px;background:#b9a4a8"></div><div style="left:308px;top:861px;width:58px;height:6px;background:#96858a"></div><div style="left:370px;top:861px;width:58px;height:6px;background:#b9a4a8"></div><div style="left:432px;top:861px;width:58px;height:6px;background:#96858a"></div>

<!-- annotation rects -->
<div style="left:60px;top:82px;width:165px;height:79px;box-sizing:border-box;border:3px solid #ee3a3a"></div>
<div style="left:968px;top:90px;width:460px;height:304px;box-sizing:border-box;border:3px solid #ee3a3a"></div>
<div class="box" style="left:758px;top:235px;width:123px;height:30px"></div>
<div class="box" style="left:324px;top:316px;width:112px;height:46px"></div>
<div class="box" style="left:813px;top:322px;width:117px;height:45px"></div>
<div style="left:675px;top:328px;width:100px;height:31px;box-sizing:border-box;border:3px solid #ffff00"></div>
<div style="left:647px;top:381px;width:166px;height:62px;box-sizing:border-box;border:3px solid #ffff00"></div>
<div style="left:296px;top:388px;width:99px;height:55px;box-sizing:border-box;border:3px solid #ee3a3a"></div>
<div style="left:1075px;top:399px;width:87px;height:41px;box-sizing:border-box;border:3px solid #ee3a3a"></div>
<div class="box" style="left:488px;top:423px;width:83px;height:374px"></div>
<div class="box" style="left:941px;top:420px;width:72px;height:386px"></div>

<!-- arrows -->
<svg style="position:absolute;left:0;top:0" width="1447" height="867">
<g fill="#ee3a3a">
<polygon transform="translate(1050 47) rotate(-35.5)" points="-489,0 -34,-7 -40,-18 0,0 -40,18 -34,7"/>
<polygon transform="translate(222 158) rotate(-135.4)" points="-95,0 -26,-4 -30,-13 0,0 -30,13 -26,4"/>
<polygon transform="translate(962 247) rotate(-.7)" points="-76,0 -18,-2 -22,-7 0,0 -22,7 -18,2"/>
<polygon transform="translate(550 419) rotate(152.7)" points="-133,0 -28,-5 -33,-12 0,0 -33,12 -28,5"/>
<polygon transform="translate(935 423) rotate(23.9)" points="-175,0 -28,-5 -33,-12 0,0 -33,12 -28,5"/>
</g>
<g fill="#ffff00">
<polygon transform="translate(697 462) rotate(-41.8)" points="-113,0 -20,-5 -25,-13 0,0 -25,13 -20,5"/>
<polygon transform="translate(763 460) rotate(-138.6)" points="-113,0 -20,-5 -25,-13 0,0 -25,13 -20,5"/>
<polygon transform="translate(700 663) rotate(54)" points="-140,0 -20,-5 -25,-13 0,0 -25,13 -20,5"/>
<polygon transform="translate(763 663) rotate(132.2)" points="-130,0 -20,-5 -25,-13 0,0 -25,13 -20,5"/>
<polygon transform="translate(693 684) rotate(.7)" points="-85,0 -14,-4 -16,-8 0,0 -16,8 -14,4"/>
<polygon transform="translate(766 681) rotate(178.5)" points="-79,0 -14,-4 -16,-8 0,0 -16,8 -14,4"/>
<polygon transform="translate(700 703) rotate(-20.2)" points="-101,0 -15,-5 -18,-11 0,0 -18,11 -15,5"/>
<polygon transform="translate(700 784) rotate(18)" points="-100,0 -15,-5 -18,-11 0,0 -18,11 -15,5"/>
<polygon transform="translate(765 705) rotate(-167)" points="-97,0 -15,-5 -18,-11 0,0 -18,11 -15,5"/>
<polygon transform="translate(772 780) rotate(163.3)" points="-94,0 -15,-5 -18,-11 0,0 -18,11 -15,5"/>
</g>
</svg>

<!-- annotation text -->
<span class="an" style="left:315px;top:218px">标的价格</span>
<span class="ann" style="left:763px;top:240px;font-size:13.500px">标的50ETF分时图</span>
<span class="ann" style="left:335px;top:330px">判断行情上涨</span>
<span class="ann" style="left:827px;top:336px">判断行情下跌</span>
<span class="an" style="left:688px;top:332px">合约价格</span>
<span class="an" style="left:693px;top:387px">合约期限</span>
<span class="an" style="left:580px;top:537px">实值</span><span class="an" style="left:893px;top:540px">虚值</span>
<span class="an" style="left:568px;top:671px">平值</span><span class="an" style="left:903px;top:671px">平值</span>
<span class="an" style="left:572px;top:733px">虚值</span><span class="an" style="left:892px;top:729px">实值</span>

<!-- watermark -->
<svg style="position:absolute;left:0;top:0" width="1447" height="867">
<circle cx="1184" cy="790" r="20" fill="#d8d8d8"/><circle cx="1176" cy="786" r="2.500" fill="#555"/><circle cx="1192" cy="786" r="2.500" fill="#555"/>
<circle cx="1204" cy="804" r="15" fill="#e4e4e4" stroke="#222"/><circle cx="1198" cy="801" r="2" fill="#555"/><circle cx="1210" cy="801" r="2" fill="#555"/>
<circle cx="846" cy="826" r="29" fill="none" stroke="#fff" stroke-width="6"/>
<path d="M836 802 827 818Q824 824 829 830L842 847M862 806 851 820Q847 826 851 832L858 843" fill="none" stroke="#fff" stroke-width="6"/>
</svg>
<span style="left:1230px;top:783px;font-size:35px;line-height:42px;color:#cfcfcf">ETF期权通</span>
<span style="left:895px;top:791px;font-size:53px;line-height:70px;font-weight:400;color:#fff;text-shadow:2px 2px 2px rgba(40,40,40,.6)">雪球：一片空白又见花</span>

</div></body></html>
